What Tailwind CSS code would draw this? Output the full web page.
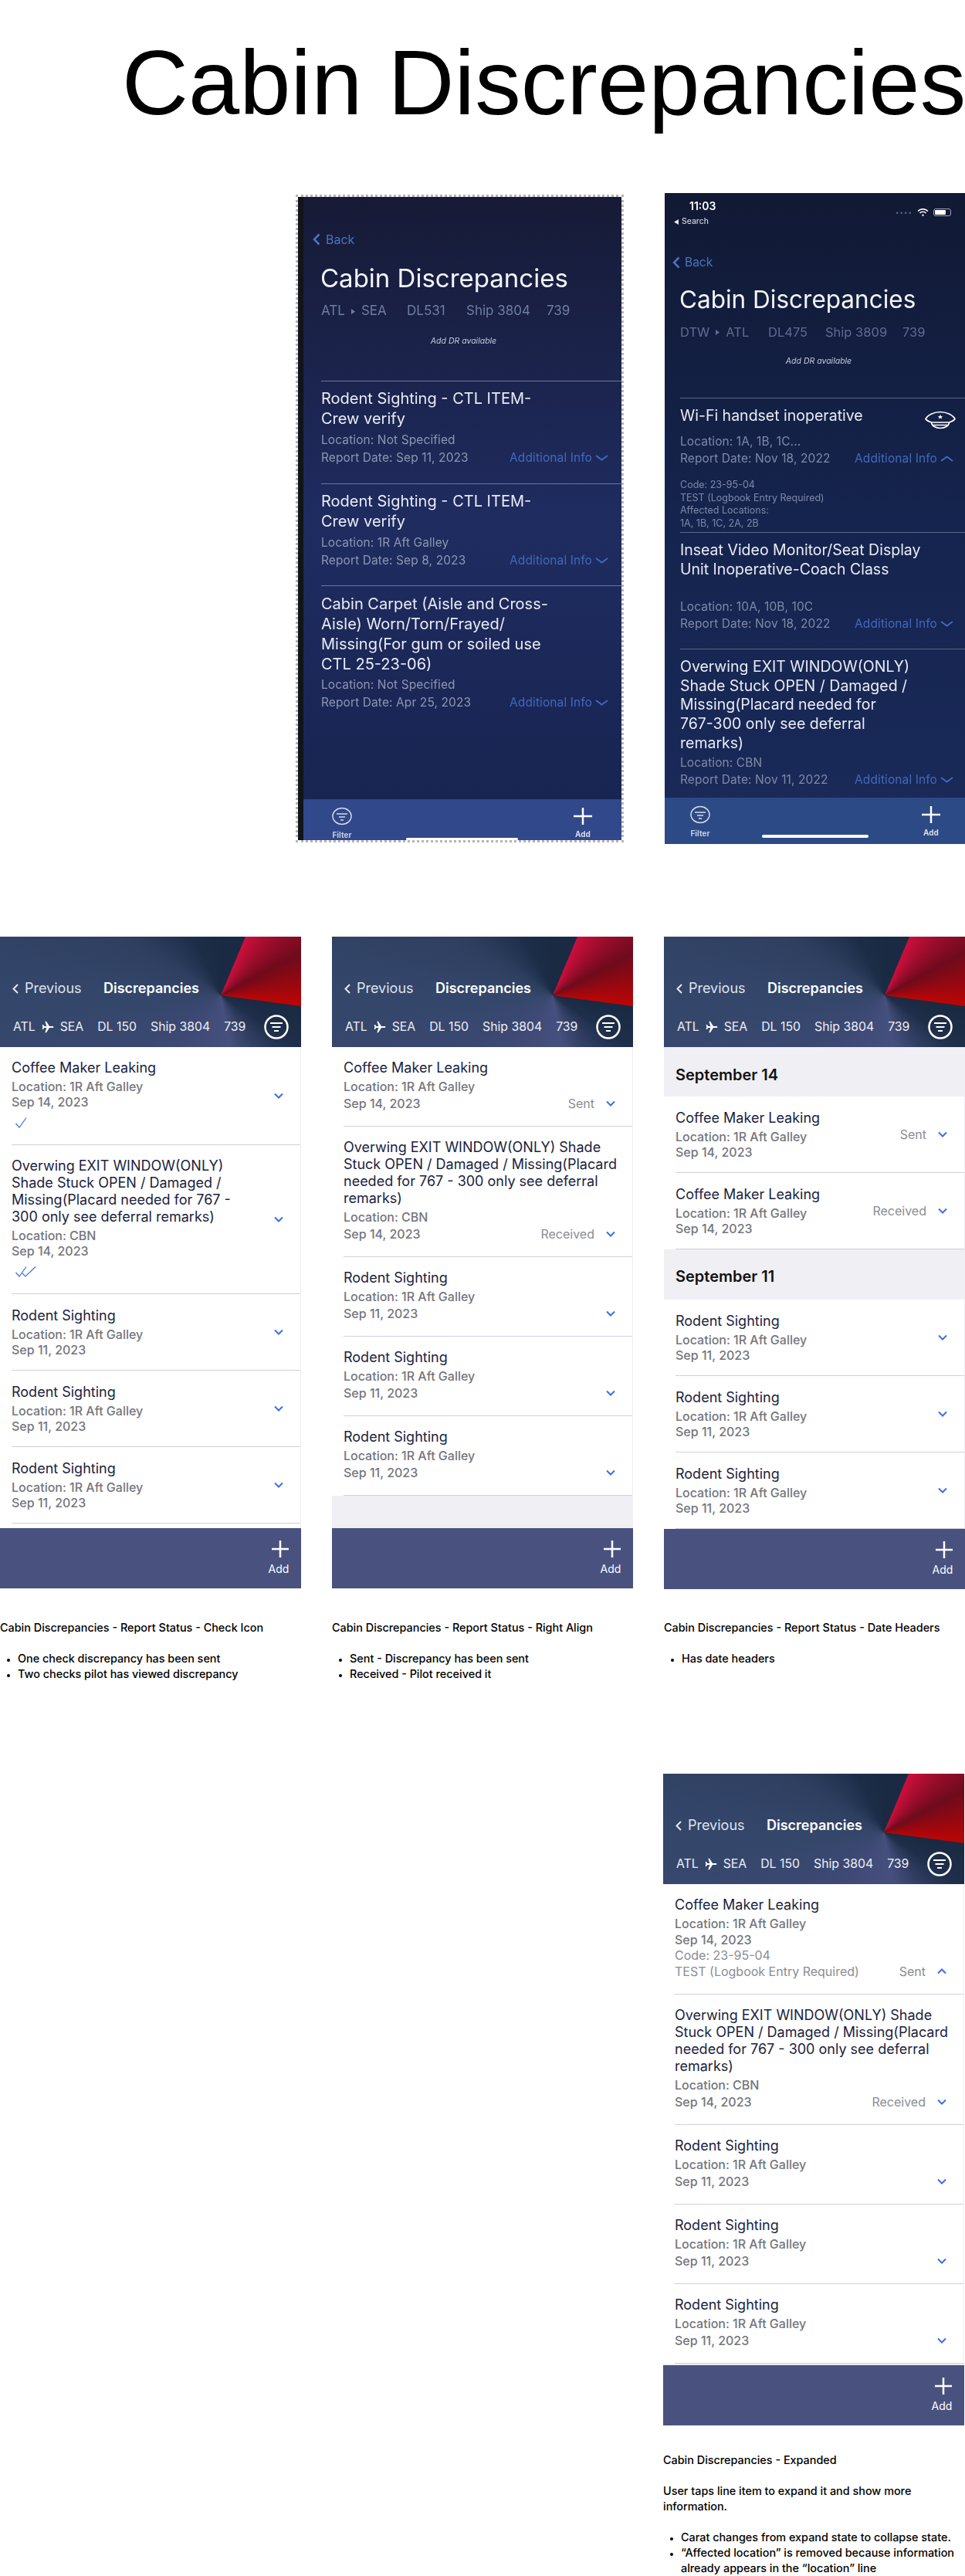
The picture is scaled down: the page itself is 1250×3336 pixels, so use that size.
<!DOCTYPE html>
<html lang="en">
<head>
  <meta charset="UTF-8">
  <title>Cabin Discrepancies</title>
  <script src="https://cdn.jsdelivr.net/npm/@tailwindcss/browser@4"></script>
</head>
<body class="bg-white w-[1250px] h-[3336px] overflow-hidden font-['Inter',sans-serif]">

  <!-- Page title -->
  <div class="h-[250px] pt-[47px] pl-[158px]">
    <h1 class="text-[119px] leading-[119px] tracking-[0.1px] whitespace-nowrap text-black font-['Liberation_Sans',sans-serif]">Cabin Discrepancies</h1>
  </div>

  <!-- Current app screenshots -->
  <div class="h-[963px] flex items-start pl-[383px]">

    <!-- Screenshot 1 -->
    <div class="mt-[2px] w-[425px] h-[839px] border-[3px] border-dotted border-[#b5b5b5] flex overflow-hidden">
      <div class="w-[7px] bg-[#111418] shrink-0"></div>
      <div class="relative flex-1 flex flex-col bg-linear-to-b from-[#161a36] via-[#1f2c60] to-[#17234f] blur-[0.4px]">
        <div class="mt-[43px] ml-[12px] h-6 flex items-center gap-[7px] text-[16px] text-[#4b74c0]">
          <svg class="w-[10px] h-[16px]" viewBox="0 0 10 16" fill="none" stroke="#4b74c0" stroke-width="2.5"><path d="M8.5 1.5 2 8l6.500 6.500"/></svg>
          <span>Back</span>
        </div>
        <div class="mt-[18px] ml-[22px] h-10 text-[33px] leading-10 text-[#f2f4f8]">Cabin Discrepancies</div>
        <div class="mt-[11px] ml-[23px] h-6 flex items-center text-[17px] text-[#6f7ca3]">
          <span class="flex items-center gap-2 w-[111px]">ATL <svg class="w-[5px] h-[7px]" viewBox="0 0 5 7" fill="#6f7ca3"><path d="M0 0l5 3.500L0 7z"/></svg> SEA</span>
          <span class="w-[77px]">DL531</span>
          <span class="w-[104px]">Ship 3804</span>
          <span>739</span>
        </div>
        <div class="mt-[19px] h-4 text-center text-[10.5px] leading-4 italic text-[#c3cade] pl-[3px]">Add DR available</div>

        <div class="mt-[43px] ml-[23px] border-t border-[#6a759f] pt-[9px] pb-[22px] pr-[17px]">
          <div class="text-[20px] leading-[26px] text-[#e8ebf3]">Rodent Sighting - CTL ITEM-<br>Crew verify</div>
          <div class="mt-[3px] text-[15.5px] tracking-[0.1px] leading-[23px] text-[#8d96b1]">Location: Not Specified</div>
          <div class="flex items-center justify-between text-[15.5px] tracking-[0.1px] leading-[23px] text-[#8d96b1]">
            <span>Report Date: Sep 11, 2023</span>
            <span class="flex items-center gap-1 text-[#4069bc]">Additional Info <svg class="w-[17px] h-[8px]" viewBox="0 0 17 8" fill="none" stroke="#4069bc" stroke-width="2"><path d="M1 1l7.500 5.500L16 1"/></svg></span>
          </div>
        </div>
        <div class="ml-[23px] border-t border-[#6a759f] pt-[9px] pb-[21px] pr-[17px]">
          <div class="text-[20px] leading-[26px] text-[#e8ebf3]">Rodent Sighting - CTL ITEM-<br>Crew verify</div>
          <div class="mt-[3px] text-[15.5px] tracking-[0.1px] leading-[23px] text-[#8d96b1]">Location: 1R Aft Galley</div>
          <div class="flex items-center justify-between text-[15.5px] tracking-[0.1px] leading-[23px] text-[#8d96b1]">
            <span>Report Date: Sep 8, 2023</span>
            <span class="flex items-center gap-1 text-[#4069bc]">Additional Info <svg class="w-[17px] h-[8px]" viewBox="0 0 17 8" fill="none" stroke="#4069bc" stroke-width="2"><path d="M1 1l7.500 5.500L16 1"/></svg></span>
          </div>
        </div>
        <div class="ml-[23px] border-t border-[#6a759f] pt-[10px] pr-[17px]">
          <div class="text-[20px] leading-[26px] text-[#e8ebf3]">Cabin Carpet (Aisle and Cross-<br>Aisle) Worn/Torn/Frayed/<br>Missing(For gum or soiled use<br>CTL 25-23-06)</div>
          <div class="mt-[2px] text-[15.5px] tracking-[0.1px] leading-[23px] text-[#8d96b1]">Location: Not Specified</div>
          <div class="flex items-center justify-between text-[15.5px] tracking-[0.1px] leading-[23px] text-[#8d96b1]">
            <span>Report Date: Apr 25, 2023</span>
            <span class="flex items-center gap-1 text-[#4069bc]">Additional Info <svg class="w-[17px] h-[8px]" viewBox="0 0 17 8" fill="none" stroke="#4069bc" stroke-width="2"><path d="M1 1l7.500 5.500L16 1"/></svg></span>
          </div>
        </div>

        <div class="mt-auto h-[53px] bg-[#31488a] flex justify-between px-[30px] pt-[10px]">
          <div class="w-10 flex flex-col items-center">
            <svg class="w-[26px] h-[24px]" viewBox="0 0 26 24" fill="none" stroke="#d5dbe8" stroke-width="1.5"><ellipse cx="13" cy="12" rx="12" ry="10.5"/><path d="M6 9h14M9 13h8M11 17h4"/></svg>
            <span class="mt-[6px] text-[10px] leading-3 font-bold text-[#c5cde0]">Filter</span>
          </div>
          <div class="w-10 flex flex-col items-center">
            <svg class="w-6 h-6" viewBox="0 0 24 24" fill="none" stroke="#fff" stroke-width="2.5"><path d="M12 1v22M0 12h24"/></svg>
            <span class="mt-[5px] text-[10px] leading-3 font-bold text-[#d5dbe8]">Add</span>
          </div>
        </div>
        <div class="absolute left-[133px] bottom-0 w-[145px] h-[3px] rounded-full bg-white"></div>
      </div>
    </div>

    <!-- Screenshot 2 -->
    <div class="relative ml-[53px] w-[389px] h-[843px] flex flex-col bg-linear-to-b from-[#111934] via-[#15244e] to-[#1a2a5a] blur-[0.4px] overflow-hidden">
      <div class="flex justify-between pt-2 pr-[18px]">
        <div>
          <div class="pl-[32px] h-[18px] text-[14px] leading-[18px] font-semibold text-white">11:03</div>
          <div class="mt-1 pl-[12px] h-[14px] flex items-center gap-1 text-[10.5px] text-[#e5e8f0]"><svg class="w-[6px] h-[7px]" viewBox="0 0 6 7" fill="#e5e8f0"><path d="M6 0v7L0 3.500z"/></svg>Search</div>
        </div>
        <div class="flex items-center gap-[6px] h-[34px]">
          <div class="text-[8px] tracking-[1px] text-[#5c6684]">••••</div>
          <svg class="w-[15px] h-[10px]" viewBox="0 0 15 10" fill="none" stroke="#fff" stroke-width="1.6"><path d="M1 3.500a9 9 0 0 1 13 0M3.500 6a5.500 5.500 0 0 1 8 0"/><circle cx="7.5" cy="8.6" r="1.2" fill="#fff" stroke="none"/></svg>
          <div class="w-[23px] h-[10px] rounded-[3px] border border-[#9aa3b8] p-[1px]"><div class="w-[14px] h-full rounded-[1px] bg-white"></div></div>
        </div>
      </div>
      <div class="mt-[34px] ml-[10px] h-6 flex items-center gap-[6px] text-[15.5px] text-[#4b74c0]">
        <svg class="w-[10px] h-[16px]" viewBox="0 0 10 16" fill="none" stroke="#4b74c0" stroke-width="2.5"><path d="M8.5 1.5 2 8l6.500 6.500"/></svg>
        <span>Back</span>
      </div>
      <div class="mt-4 ml-[19px] h-10 text-[31.5px] leading-10 text-[#f2f4f8]">Cabin Discrepancies</div>
      <div class="mt-[10px] ml-5 h-6 flex items-center text-[16.5px] text-[#5f6c92]">
        <span class="flex items-center gap-2 w-[114px]">DTW <svg class="w-[5px] h-[7px]" viewBox="0 0 5 7" fill="#5f6c92"><path d="M0 0l5 3.500L0 7z"/></svg> ATL</span>
        <span class="w-[74px]">DL475</span>
        <span class="w-[100px]">Ship 3809</span>
        <span>739</span>
      </div>
      <div class="mt-[18px] h-4 text-center text-[10.5px] leading-4 italic text-[#c3cade] pl-[10px]">Add DR available</div>

      <div class="mt-[39px] ml-5 border-t border-[#5b6688] pt-[10px] pb-[2px] pr-[15px]">
        <div class="h-[25px] flex justify-between items-start text-[19.5px] leading-[25px] text-[#e8ebf3]">
          <span>Wi-Fi handset inoperative</span>
          <svg class="mt-[6px] w-10 h-6 shrink-0 -mr-[3px]" viewBox="0 0 40 24" fill="none" stroke="#fff" stroke-width="1.6"><path d="M1 10.500C4 5 12 1.500 20 1.500S36 5 39 10.500c-2 3-6 4-7.500 4.500h-23C7 14.500 3 13.500 1 10.500z"/><path d="M8.500 15c0 4 5 7.500 11.500 7.500S31.500 19 31.500 15M9 18.500h22"/><path d="M20 5l1 2h2.200l-1.700 1.300.6 2.200-2.100-1.300-2.100 1.300.6-2.200L16.800 7H19z" fill="#fff" stroke="none"/></svg>
        </div>
        <div class="mt-[10px] text-[15.5px] tracking-[0.1px] leading-[22px] text-[#7e89a8]">Location: 1A, 1B, 1C...</div>
        <div class="flex items-center justify-between text-[15.5px] tracking-[0.1px] leading-[22px] text-[#7e89a8]">
          <span>Report Date: Nov 18, 2022</span>
          <span class="flex items-center gap-1 text-[#4069bc]">Additional Info <svg class="w-[17px] h-[8px]" viewBox="0 0 17 8" fill="none" stroke="#4069bc" stroke-width="2"><path d="M1 7l7.500-5.500L16 7"/></svg></span>
        </div>
        <div class="mt-[15px] text-[12.5px] leading-[16.7px] text-[#7e89a8]">Code: 23-95-04<br>TEST (Logbook Entry Required)<br>Affected Locations:<br>1A, 1B, 1C, 2A, 2B</div>
      </div>
      <div class="ml-5 border-t border-[#5b6688] pt-[10px] pb-[21px] pr-[15px]">
        <div class="text-[19.5px] leading-[25px] text-[#e8ebf3]">Inseat Video Monitor/Seat Display<br>Unit Inoperative-Coach Class</div>
        <div class="mt-[25px] text-[15.5px] tracking-[0.1px] leading-[22px] text-[#7e89a8]">Location: 10A, 10B, 10C</div>
        <div class="flex items-center justify-between text-[15.5px] tracking-[0.1px] leading-[22px] text-[#7e89a8]">
          <span>Report Date: Nov 18, 2022</span>
          <span class="flex items-center gap-1 text-[#4069bc]">Additional Info <svg class="w-[17px] h-[8px]" viewBox="0 0 17 8" fill="none" stroke="#4069bc" stroke-width="2"><path d="M1 1l7.500 5.500L16 1"/></svg></span>
        </div>
      </div>
      <div class="ml-5 border-t border-[#5b6688] pt-[10px] pr-[15px]">
        <div class="text-[19.5px] leading-[24.8px] text-[#e8ebf3]">Overwing EXIT WINDOW(ONLY)<br>Shade Stuck OPEN / Damaged /<br>Missing(Placard needed for<br>767-300 only see deferral<br>remarks)</div>
        <div class="mt-[2px] text-[15.5px] tracking-[0.1px] leading-[22px] text-[#7e89a8]">Location: CBN</div>
        <div class="flex items-center justify-between text-[15.5px] tracking-[0.1px] leading-[22px] text-[#7e89a8]">
          <span>Report Date: Nov 11, 2022</span>
          <span class="flex items-center gap-1 text-[#4069bc]">Additional Info <svg class="w-[17px] h-[8px]" viewBox="0 0 17 8" fill="none" stroke="#4069bc" stroke-width="2"><path d="M1 1l7.500 5.500L16 1"/></svg></span>
        </div>
      </div>

      <div class="absolute left-0 right-0 bottom-0 h-[60px] bg-[#2c4a85] flex justify-between pl-[26px] pr-[24px] pt-[10px]">
        <div class="w-10 flex flex-col items-center">
          <svg class="w-[26px] h-[24px]" viewBox="0 0 26 24" fill="none" stroke="#d5dbe8" stroke-width="1.5"><ellipse cx="13" cy="12" rx="12" ry="10.5"/><path d="M6 9h14M9 13h8M11 17h4"/></svg>
          <span class="mt-[6px] text-[10px] leading-3 font-bold text-[#c5cde0]">Filter</span>
        </div>
        <div class="w-10 flex flex-col items-center">
          <svg class="w-6 h-6" viewBox="0 0 24 24" fill="none" stroke="#fff" stroke-width="2.5"><path d="M12 1v22M0 12h24"/></svg>
          <span class="mt-[5px] text-[10px] leading-3 font-bold text-[#d5dbe8]">Add</span>
        </div>
      </div>
      <div class="absolute left-[126px] bottom-[8px] w-[138px] h-[4px] rounded-full bg-white"></div>
    </div>
  </div>

  <!-- Report status options -->
  <div class="h-[1084px] grid grid-cols-[390px_390px_390px] gap-x-10 items-start">

    <!-- Option: check icon -->
    <div>
      <div class="w-[390px] h-[844px] flex flex-col bg-[#efeff4]">
        <div class="relative h-[143px] shrink-0 overflow-hidden bg-[conic-gradient(from_0deg_at_286px_76px,#1a2a42_0deg,#1a2a42_100deg,#1f2f4b_125deg,#46507e_170deg,#3f4a76_215deg,#34466a_270deg,#2e3f60_300deg,#1c2d48_335deg,#1a2a42_360deg)]">
          <div class="absolute left-[286px] top-0 w-[104px] h-[91px] [clip-path:polygon(32px_0,104px_0,104px_90px,0_76px)] bg-[conic-gradient(from_0deg_at_0_76px,#cc0f3d_23deg,#6e0b1c_62deg,#bd0505_98deg)]"></div>
          <div class="relative pt-[55px] pl-[16px] h-[79px] flex items-center text-[18px] leading-6">
            <svg class="w-[8px] h-[13px]" viewBox="0 0 8 13" fill="none" stroke="#e6e9f2" stroke-width="2"><path d="M7 1 1.500 6.500 7 12"/></svg>
            <span class="ml-[8px] w-[102px] text-[#dfe3ee]">Previous</span>
            <span class="font-semibold text-white">Discrepancies</span>
          </div>
          <div class="relative mt-[22px] pl-[17px] pr-4 h-8 flex items-center justify-between text-[15.8px] text-[#eef0f6]">
            <div class="flex items-center gap-[18px]">
              <span class="flex items-center gap-2">ATL <svg class="w-4 h-4" viewBox="0 0 24 24" fill="#fff"><path d="M23 12c0-.8-.7-1.500-1.500-1.500H15L9 1H6.500l3 9.500H5L3 7.500H1L2 12l-1 4.500h2L5 13.500h4.500L6.500 23H9l6-9.500h6.500c.8 0 1.500-.7 1.500-1.500z"/></svg> SEA</span>
              <span>DL 150</span><span>Ship 3804</span><span>739</span>
            </div>
            <svg class="w-8 h-8" viewBox="0 0 32 32" fill="none" stroke="#fff"><circle cx="16" cy="16" r="14.500" stroke-width="2.500"/><path d="M8 11h16M10.500 16h11M13 21h6" stroke-width="2"/></svg>
          </div>
        </div>
        <div class="flex-1 bg-white border-r border-[#eeeef3]">
          <div class="ml-[15px] flex items-center justify-between border-b border-[#cfcfe3] pr-[22px] h-[127px]">
            <div class="pt-4 pb-[21px]">
              <div class="text-[18px] leading-[22px] text-[#1a2340]">Coffee Maker Leaking</div>
              <div class="mt-[3px] text-[16px] leading-5 font-medium text-[#74767c]">Location: 1R Aft Galley</div>
              <div class="text-[16px] leading-5 font-medium text-[#74767c]">Sep 14, 2023</div>
              <svg class="mt-[10px] ml-[5px] w-[15px] h-[14px]" viewBox="0 0 15 14" fill="none" stroke="#3b6fe0" stroke-width="1.200"><path d="M0.500 8 5 13 14 0.500"/></svg>
            </div>
            <svg class="w-3 h-2 shrink-0" viewBox="0 0 12 8" fill="none" stroke="#3b6fe0" stroke-width="2"><path d="M1 1.500l5 5 5-5"/></svg>
          </div>
          <div class="ml-[15px] flex items-center justify-between border-b border-[#cfcfe3] pr-[22px] h-[193px]">
            <div class="pt-4 pb-[21px]">
              <div class="text-[18px] leading-[22px] text-[#1a2340]">Overwing EXIT WINDOW(ONLY)<br>Shade Stuck OPEN / Damaged /<br>Missing(Placard needed for 767 -<br>300 only see deferral remarks)</div>
              <div class="mt-[3px] text-[16px] leading-5 font-medium text-[#74767c]">Location: CBN</div>
              <div class="text-[16px] leading-5 font-medium text-[#74767c]">Sep 14, 2023</div>
              <svg class="mt-[10px] ml-[5px] w-[27px] h-[14px]" viewBox="0 0 27 14" fill="none" stroke="#3b6fe0" stroke-width="1.200"><path d="M0.500 8 5 13 14 0.500M9 9l4 4 13-12.500"/></svg>
            </div>
            <svg class="w-3 h-2 shrink-0" viewBox="0 0 12 8" fill="none" stroke="#3b6fe0" stroke-width="2"><path d="M1 1.500l5 5 5-5"/></svg>
          </div>
          <div class="ml-[15px] flex items-center justify-between border-b border-[#cfcfe3] pr-[22px] h-[99px]">
            <div>
              <div class="text-[18px] leading-[22px] text-[#1a2340]">Rodent Sighting</div>
              <div class="mt-[3px] text-[16px] leading-5 font-medium text-[#74767c]">Location: 1R Aft Galley</div>
              <div class="text-[16px] leading-5 font-medium text-[#74767c]">Sep 11, 2023</div>
            </div>
            <svg class="w-3 h-2 shrink-0" viewBox="0 0 12 8" fill="none" stroke="#3b6fe0" stroke-width="2"><path d="M1 1.500l5 5 5-5"/></svg>
          </div>
          <div class="ml-[15px] flex items-center justify-between border-b border-[#cfcfe3] pr-[22px] h-[99px]">
            <div>
              <div class="text-[18px] leading-[22px] text-[#1a2340]">Rodent Sighting</div>
              <div class="mt-[3px] text-[16px] leading-5 font-medium text-[#74767c]">Location: 1R Aft Galley</div>
              <div class="text-[16px] leading-5 font-medium text-[#74767c]">Sep 11, 2023</div>
            </div>
            <svg class="w-3 h-2 shrink-0" viewBox="0 0 12 8" fill="none" stroke="#3b6fe0" stroke-width="2"><path d="M1 1.500l5 5 5-5"/></svg>
          </div>
          <div class="ml-[15px] flex items-center justify-between border-b border-[#cfcfe3] pr-[22px] h-[99px]">
            <div>
              <div class="text-[18px] leading-[22px] text-[#1a2340]">Rodent Sighting</div>
              <div class="mt-[3px] text-[16px] leading-5 font-medium text-[#74767c]">Location: 1R Aft Galley</div>
              <div class="text-[16px] leading-5 font-medium text-[#74767c]">Sep 11, 2023</div>
            </div>
            <svg class="w-3 h-2 shrink-0" viewBox="0 0 12 8" fill="none" stroke="#3b6fe0" stroke-width="2"><path d="M1 1.500l5 5 5-5"/></svg>
          </div>
        </div>
        <div class="h-[78px] shrink-0 bg-[#49527f] flex justify-end pr-[15px]">
          <div class="flex flex-col items-center pt-4 w-[28px]">
            <svg class="w-[22px] h-[22px] ml-[3px]" viewBox="0 0 22 22" fill="none" stroke="#fff" stroke-width="2.500"><path d="M11 0v22M0 11h22"/></svg>
            <span class="mt-[7px] text-[14px] leading-4 text-white">Add</span>
          </div>
        </div>
      </div>
      <div class="mt-[41px] text-[14.4px] leading-5 font-medium text-black">Cabin Discrepancies - Report Status - Check Icon</div>
      <ul class="mt-5 text-[14.4px] leading-5 font-medium text-black list-disc pl-[23px] marker:text-[11px]">
        <li>One check discrepancy has been sent</li>
        <li>Two checks pilot has viewed discrepancy</li>
      </ul>
    </div>

    <!-- Option: right align -->
    <div>
      <div class="w-[390px] h-[844px] flex flex-col bg-[#efeff4]">
        <div class="relative h-[143px] shrink-0 overflow-hidden bg-[conic-gradient(from_0deg_at_286px_76px,#1a2a42_0deg,#1a2a42_100deg,#1f2f4b_125deg,#46507e_170deg,#3f4a76_215deg,#34466a_270deg,#2e3f60_300deg,#1c2d48_335deg,#1a2a42_360deg)]">
          <div class="absolute left-[286px] top-0 w-[104px] h-[91px] [clip-path:polygon(32px_0,104px_0,104px_90px,0_76px)] bg-[conic-gradient(from_0deg_at_0_76px,#cc0f3d_23deg,#6e0b1c_62deg,#bd0505_98deg)]"></div>
          <div class="relative pt-[55px] pl-[16px] h-[79px] flex items-center text-[18px] leading-6">
            <svg class="w-[8px] h-[13px]" viewBox="0 0 8 13" fill="none" stroke="#e6e9f2" stroke-width="2"><path d="M7 1 1.500 6.500 7 12"/></svg>
            <span class="ml-[8px] w-[102px] text-[#dfe3ee]">Previous</span>
            <span class="font-semibold text-white">Discrepancies</span>
          </div>
          <div class="relative mt-[22px] pl-[17px] pr-4 h-8 flex items-center justify-between text-[15.8px] text-[#eef0f6]">
            <div class="flex items-center gap-[18px]">
              <span class="flex items-center gap-2">ATL <svg class="w-4 h-4" viewBox="0 0 24 24" fill="#fff"><path d="M23 12c0-.8-.7-1.500-1.500-1.500H15L9 1H6.500l3 9.500H5L3 7.500H1L2 12l-1 4.500h2L5 13.500h4.500L6.500 23H9l6-9.500h6.500c.8 0 1.500-.7 1.500-1.500z"/></svg> SEA</span>
              <span>DL 150</span><span>Ship 3804</span><span>739</span>
            </div>
            <svg class="w-8 h-8" viewBox="0 0 32 32" fill="none" stroke="#fff"><circle cx="16" cy="16" r="14.500" stroke-width="2.500"/><path d="M8 11h16M10.500 16h11M13 21h6" stroke-width="2"/></svg>
          </div>
        </div>
        <div class="flex-1">
          <div class="bg-white border-r border-[#eeeef3]">
            <div class="ml-[15px] flex items-end justify-between border-b border-[#cfcfe3] pr-[22px] pt-4 pb-[19px]">
              <div>
                <div class="text-[18px] leading-[22px] text-[#1a2340]">Coffee Maker Leaking</div>
                <div class="mt-[3px] text-[16px] leading-5 font-medium text-[#74767c]">Location: 1R Aft Galley</div>
                <div class="mt-[2px] text-[16px] leading-5 font-medium text-[#74767c]">Sep 14, 2023</div>
              </div>
              <div class="h-5 flex items-center gap-[15px] text-[16px] text-[#8a8d94]">Sent <svg class="w-3 h-2 shrink-0" viewBox="0 0 12 8" fill="none" stroke="#3b6fe0" stroke-width="2"><path d="M1 1.500l5 5 5-5"/></svg></div>
            </div>
            <div class="ml-[15px] flex items-end justify-between border-b border-[#cfcfe3] pr-[22px] pt-4 pb-[19px]">
              <div class="flex-1 min-w-0">
                <div class="text-[18px] leading-[22px] text-[#1a2340] whitespace-nowrap">Overwing EXIT WINDOW(ONLY) Shade<br>Stuck OPEN / Damaged / Missing(Placard<br>needed for 767 - 300 only see deferral<br>remarks)</div>
                <div class="mt-[3px] text-[16px] leading-5 font-medium text-[#74767c]">Location: CBN</div>
                <div class="mt-[2px] text-[16px] leading-5 font-medium text-[#74767c]">Sep 14, 2023</div>
              </div>
              <div class="h-5 shrink-0 flex items-center gap-[15px] text-[16px] text-[#8a8d94]">Received <svg class="w-3 h-2 shrink-0" viewBox="0 0 12 8" fill="none" stroke="#3b6fe0" stroke-width="2"><path d="M1 1.500l5 5 5-5"/></svg></div>
            </div>
            <div class="ml-[15px] flex items-end justify-between border-b border-[#cfcfe3] pr-[22px] pt-4 pb-[19px]">
              <div>
                <div class="text-[18px] leading-[22px] text-[#1a2340]">Rodent Sighting</div>
                <div class="mt-[3px] text-[16px] leading-5 font-medium text-[#74767c]">Location: 1R Aft Galley</div>
                <div class="mt-[2px] text-[16px] leading-5 font-medium text-[#74767c]">Sep 11, 2023</div>
              </div>
              <div class="h-5 flex items-center"><svg class="w-3 h-2 shrink-0" viewBox="0 0 12 8" fill="none" stroke="#3b6fe0" stroke-width="2"><path d="M1 1.500l5 5 5-5"/></svg></div>
            </div>
            <div class="ml-[15px] flex items-end justify-between border-b border-[#cfcfe3] pr-[22px] pt-4 pb-[19px]">
              <div>
                <div class="text-[18px] leading-[22px] text-[#1a2340]">Rodent Sighting</div>
                <div class="mt-[3px] text-[16px] leading-5 font-medium text-[#74767c]">Location: 1R Aft Galley</div>
                <div class="mt-[2px] text-[16px] leading-5 font-medium text-[#74767c]">Sep 11, 2023</div>
              </div>
              <div class="h-5 flex items-center"><svg class="w-3 h-2 shrink-0" viewBox="0 0 12 8" fill="none" stroke="#3b6fe0" stroke-width="2"><path d="M1 1.500l5 5 5-5"/></svg></div>
            </div>
            <div class="ml-[15px] flex items-end justify-between border-b border-[#cfcfe3] pr-[22px] pt-4 pb-[19px]">
              <div>
                <div class="text-[18px] leading-[22px] text-[#1a2340]">Rodent Sighting</div>
                <div class="mt-[3px] text-[16px] leading-5 font-medium text-[#74767c]">Location: 1R Aft Galley</div>
                <div class="mt-[2px] text-[16px] leading-5 font-medium text-[#74767c]">Sep 11, 2023</div>
              </div>
              <div class="h-5 flex items-center"><svg class="w-3 h-2 shrink-0" viewBox="0 0 12 8" fill="none" stroke="#3b6fe0" stroke-width="2"><path d="M1 1.500l5 5 5-5"/></svg></div>
            </div>
          </div>
        </div>
        <div class="h-[78px] shrink-0 bg-[#49527f] flex justify-end pr-[15px]">
          <div class="flex flex-col items-center pt-4 w-[28px]">
            <svg class="w-[22px] h-[22px] ml-[3px]" viewBox="0 0 22 22" fill="none" stroke="#fff" stroke-width="2.500"><path d="M11 0v22M0 11h22"/></svg>
            <span class="mt-[7px] text-[14px] leading-4 text-white">Add</span>
          </div>
        </div>
      </div>
      <div class="mt-[41px] text-[14.4px] leading-5 font-medium text-black">Cabin Discrepancies - Report Status - Right Align</div>
      <ul class="mt-5 text-[14.4px] leading-5 font-medium text-black list-disc pl-[23px] marker:text-[11px]">
        <li>Sent - Discrepancy has been sent</li>
        <li>Received - Pilot received it</li>
      </ul>
    </div>

    <!-- Option: date headers -->
    <div>
      <div class="w-[390px] h-[844px] flex flex-col bg-[#efeff4]">
        <div class="relative h-[143px] shrink-0 overflow-hidden bg-[conic-gradient(from_0deg_at_286px_76px,#1a2a42_0deg,#1a2a42_100deg,#1f2f4b_125deg,#46507e_170deg,#3f4a76_215deg,#34466a_270deg,#2e3f60_300deg,#1c2d48_335deg,#1a2a42_360deg)]">
          <div class="absolute left-[286px] top-0 w-[104px] h-[91px] [clip-path:polygon(32px_0,104px_0,104px_90px,0_76px)] bg-[conic-gradient(from_0deg_at_0_76px,#cc0f3d_23deg,#6e0b1c_62deg,#bd0505_98deg)]"></div>
          <div class="relative pt-[55px] pl-[16px] h-[79px] flex items-center text-[18px] leading-6">
            <svg class="w-[8px] h-[13px]" viewBox="0 0 8 13" fill="none" stroke="#e6e9f2" stroke-width="2"><path d="M7 1 1.500 6.500 7 12"/></svg>
            <span class="ml-[8px] w-[102px] text-[#dfe3ee]">Previous</span>
            <span class="font-semibold text-white">Discrepancies</span>
          </div>
          <div class="relative mt-[22px] pl-[17px] pr-4 h-8 flex items-center justify-between text-[15.8px] text-[#eef0f6]">
            <div class="flex items-center gap-[18px]">
              <span class="flex items-center gap-2">ATL <svg class="w-4 h-4" viewBox="0 0 24 24" fill="#fff"><path d="M23 12c0-.8-.7-1.500-1.500-1.500H15L9 1H6.500l3 9.500H5L3 7.500H1L2 12l-1 4.500h2L5 13.500h4.500L6.500 23H9l6-9.500h6.500c.8 0 1.500-.7 1.500-1.500z"/></svg> SEA</span>
              <span>DL 150</span><span>Ship 3804</span><span>739</span>
            </div>
            <svg class="w-8 h-8" viewBox="0 0 32 32" fill="none" stroke="#fff"><circle cx="16" cy="16" r="14.500" stroke-width="2.500"/><path d="M8 11h16M10.500 16h11M13 21h6" stroke-width="2"/></svg>
          </div>
        </div>
        <div class="flex-1">
          <div class="h-16 pl-[15px] pt-2 flex items-center text-[20px] font-semibold text-[#111]">September 14</div>
          <div class="bg-white border-r border-[#eeeef3]">
            <div class="ml-[15px] h-[99px] flex items-center justify-between border-b border-[#cfcfe3] pr-[22px]">
              <div>
                <div class="text-[18px] leading-[22px] text-[#1a2340]">Coffee Maker Leaking</div>
                <div class="mt-[3px] text-[16px] leading-5 font-medium text-[#74767c]">Location: 1R Aft Galley</div>
                <div class="text-[16px] leading-5 font-medium text-[#74767c]">Sep 14, 2023</div>
              </div>
              <div class="flex items-center gap-[15px] text-[16px] text-[#8a8d94]">Sent <svg class="w-3 h-2 shrink-0" viewBox="0 0 12 8" fill="none" stroke="#3b6fe0" stroke-width="2"><path d="M1 1.500l5 5 5-5"/></svg></div>
            </div>
            <div class="ml-[15px] h-[99px] flex items-center justify-between border-b border-[#cfcfe3] pr-[22px]">
              <div>
                <div class="text-[18px] leading-[22px] text-[#1a2340]">Coffee Maker Leaking</div>
                <div class="mt-[3px] text-[16px] leading-5 font-medium text-[#74767c]">Location: 1R Aft Galley</div>
                <div class="text-[16px] leading-5 font-medium text-[#74767c]">Sep 14, 2023</div>
              </div>
              <div class="flex items-center gap-[15px] text-[16px] text-[#8a8d94]">Received <svg class="w-3 h-2 shrink-0" viewBox="0 0 12 8" fill="none" stroke="#3b6fe0" stroke-width="2"><path d="M1 1.500l5 5 5-5"/></svg></div>
            </div>
          </div>
          <div class="h-[65px] pl-[15px] pt-1 flex items-center text-[20px] font-semibold text-[#111]">September 11</div>
          <div class="bg-white border-r border-[#eeeef3]">
            <div class="ml-[15px] h-[99px] flex items-center justify-between border-b border-[#cfcfe3] pr-[22px]">
              <div>
                <div class="text-[18px] leading-[22px] text-[#1a2340]">Rodent Sighting</div>
                <div class="mt-[3px] text-[16px] leading-5 font-medium text-[#74767c]">Location: 1R Aft Galley</div>
                <div class="text-[16px] leading-5 font-medium text-[#74767c]">Sep 11, 2023</div>
              </div>
              <svg class="w-3 h-2 shrink-0" viewBox="0 0 12 8" fill="none" stroke="#3b6fe0" stroke-width="2"><path d="M1 1.500l5 5 5-5"/></svg>
            </div>
            <div class="ml-[15px] h-[99px] flex items-center justify-between border-b border-[#cfcfe3] pr-[22px]">
              <div>
                <div class="text-[18px] leading-[22px] text-[#1a2340]">Rodent Sighting</div>
                <div class="mt-[3px] text-[16px] leading-5 font-medium text-[#74767c]">Location: 1R Aft Galley</div>
                <div class="text-[16px] leading-5 font-medium text-[#74767c]">Sep 11, 2023</div>
              </div>
              <svg class="w-3 h-2 shrink-0" viewBox="0 0 12 8" fill="none" stroke="#3b6fe0" stroke-width="2"><path d="M1 1.500l5 5 5-5"/></svg>
            </div>
            <div class="ml-[15px] h-[99px] flex items-center justify-between border-b border-[#cfcfe3] pr-[22px]">
              <div>
                <div class="text-[18px] leading-[22px] text-[#1a2340]">Rodent Sighting</div>
                <div class="mt-[3px] text-[16px] leading-5 font-medium text-[#74767c]">Location: 1R Aft Galley</div>
                <div class="text-[16px] leading-5 font-medium text-[#74767c]">Sep 11, 2023</div>
              </div>
              <svg class="w-3 h-2 shrink-0" viewBox="0 0 12 8" fill="none" stroke="#3b6fe0" stroke-width="2"><path d="M1 1.500l5 5 5-5"/></svg>
            </div>
          </div>
        </div>
        <div class="h-[78px] shrink-0 bg-[#49527f] flex justify-end pr-[15px]">
          <div class="flex flex-col items-center pt-4 w-[28px]">
            <svg class="w-[22px] h-[22px] ml-[3px]" viewBox="0 0 22 22" fill="none" stroke="#fff" stroke-width="2.500"><path d="M11 0v22M0 11h22"/></svg>
            <span class="mt-[7px] text-[14px] leading-4 text-white">Add</span>
          </div>
        </div>
      </div>
      <div class="mt-[41px] text-[14.4px] leading-5 font-medium text-black">Cabin Discrepancies - Report Status - Date Headers</div>
      <ul class="mt-5 text-[14.4px] leading-5 font-medium text-black list-disc pl-[23px] marker:text-[11px]">
        <li>Has date headers</li>
      </ul>
    </div>
  </div>

  <!-- Option: expanded row -->
  <div class="pl-[859px]">
    <div class="w-[390px] h-[844px] flex flex-col bg-[#efeff4]">
      <div class="relative h-[143px] shrink-0 overflow-hidden bg-[conic-gradient(from_0deg_at_286px_76px,#1a2a42_0deg,#1a2a42_100deg,#1f2f4b_125deg,#46507e_170deg,#3f4a76_215deg,#34466a_270deg,#2e3f60_300deg,#1c2d48_335deg,#1a2a42_360deg)]">
        <div class="absolute left-[286px] top-0 w-[104px] h-[91px] [clip-path:polygon(32px_0,104px_0,104px_90px,0_76px)] bg-[conic-gradient(from_0deg_at_0_76px,#cc0f3d_23deg,#6e0b1c_62deg,#bd0505_98deg)]"></div>
        <div class="relative pt-[55px] pl-[16px] h-[79px] flex items-center text-[18px] leading-6">
          <svg class="w-[8px] h-[13px]" viewBox="0 0 8 13" fill="none" stroke="#e6e9f2" stroke-width="2"><path d="M7 1 1.500 6.500 7 12"/></svg>
          <span class="ml-[8px] w-[102px] text-[#dfe3ee]">Previous</span>
          <span class="font-semibold text-white">Discrepancies</span>
        </div>
        <div class="relative mt-[22px] pl-[17px] pr-4 h-8 flex items-center justify-between text-[15.8px] text-[#eef0f6]">
          <div class="flex items-center gap-[18px]">
            <span class="flex items-center gap-2">ATL <svg class="w-4 h-4" viewBox="0 0 24 24" fill="#fff"><path d="M23 12c0-.8-.7-1.500-1.500-1.500H15L9 1H6.500l3 9.500H5L3 7.500H1L2 12l-1 4.500h2L5 13.500h4.500L6.500 23H9l6-9.500h6.500c.8 0 1.500-.7 1.500-1.500z"/></svg> SEA</span>
            <span>DL 150</span><span>Ship 3804</span><span>739</span>
          </div>
          <svg class="w-8 h-8" viewBox="0 0 32 32" fill="none" stroke="#fff"><circle cx="16" cy="16" r="14.500" stroke-width="2.500"/><path d="M8 11h16M10.500 16h11M13 21h6" stroke-width="2"/></svg>
        </div>
      </div>
      <div class="flex-1">
        <div class="bg-white border-r border-[#eeeef3]">
          <div class="ml-[15px] flex items-end justify-between border-b border-[#cfcfe3] pr-[22px] pt-4 pb-[19px]">
            <div>
              <div class="text-[18px] leading-[22px] text-[#1a2340]">Coffee Maker Leaking</div>
              <div class="mt-[3px] text-[16px] leading-5 font-medium text-[#74767c]">Location: 1R Aft Galley</div>
              <div class="mt-[1px] text-[16px] leading-5 font-medium text-[#74767c]">Sep 14, 2023</div>
              <div class="text-[16px] leading-5 text-[#8a8d94]">Code: 23-95-04</div>
              <div class="mt-[1px] text-[16px] leading-5 text-[#8a8d94]">TEST (Logbook Entry Required)</div>
            </div>
            <div class="h-5 flex items-center gap-[15px] text-[16px] text-[#8a8d94]">Sent <svg class="w-3 h-2 shrink-0" viewBox="0 0 12 8" fill="none" stroke="#3b6fe0" stroke-width="2"><path d="M1 6.500l5-5 5 5"/></svg></div>
          </div>
          <div class="ml-[15px] flex items-end justify-between border-b border-[#cfcfe3] pr-[22px] pt-4 pb-[19px]">
            <div class="flex-1 min-w-0">
              <div class="text-[18px] leading-[22px] text-[#1a2340] whitespace-nowrap">Overwing EXIT WINDOW(ONLY) Shade<br>Stuck OPEN / Damaged / Missing(Placard<br>needed for 767 - 300 only see deferral<br>remarks)</div>
              <div class="mt-[3px] text-[16px] leading-5 font-medium text-[#74767c]">Location: CBN</div>
              <div class="mt-[2px] text-[16px] leading-5 font-medium text-[#74767c]">Sep 14, 2023</div>
            </div>
            <div class="h-5 shrink-0 flex items-center gap-[15px] text-[16px] text-[#8a8d94]">Received <svg class="w-3 h-2 shrink-0" viewBox="0 0 12 8" fill="none" stroke="#3b6fe0" stroke-width="2"><path d="M1 1.500l5 5 5-5"/></svg></div>
          </div>
          <div class="ml-[15px] flex items-end justify-between border-b border-[#cfcfe3] pr-[22px] pt-4 pb-[19px]">
            <div>
              <div class="text-[18px] leading-[22px] text-[#1a2340]">Rodent Sighting</div>
              <div class="mt-[3px] text-[16px] leading-5 font-medium text-[#74767c]">Location: 1R Aft Galley</div>
              <div class="mt-[2px] text-[16px] leading-5 font-medium text-[#74767c]">Sep 11, 2023</div>
            </div>
            <div class="h-5 flex items-center"><svg class="w-3 h-2 shrink-0" viewBox="0 0 12 8" fill="none" stroke="#3b6fe0" stroke-width="2"><path d="M1 1.500l5 5 5-5"/></svg></div>
          </div>
          <div class="ml-[15px] flex items-end justify-between border-b border-[#cfcfe3] pr-[22px] pt-4 pb-[19px]">
            <div>
              <div class="text-[18px] leading-[22px] text-[#1a2340]">Rodent Sighting</div>
              <div class="mt-[3px] text-[16px] leading-5 font-medium text-[#74767c]">Location: 1R Aft Galley</div>
              <div class="mt-[2px] text-[16px] leading-5 font-medium text-[#74767c]">Sep 11, 2023</div>
            </div>
            <div class="h-5 flex items-center"><svg class="w-3 h-2 shrink-0" viewBox="0 0 12 8" fill="none" stroke="#3b6fe0" stroke-width="2"><path d="M1 1.500l5 5 5-5"/></svg></div>
          </div>
          <div class="ml-[15px] flex items-end justify-between border-b border-[#cfcfe3] pr-[22px] pt-4 pb-[19px]">
            <div>
              <div class="text-[18px] leading-[22px] text-[#1a2340]">Rodent Sighting</div>
              <div class="mt-[3px] text-[16px] leading-5 font-medium text-[#74767c]">Location: 1R Aft Galley</div>
              <div class="mt-[2px] text-[16px] leading-5 font-medium text-[#74767c]">Sep 11, 2023</div>
            </div>
            <div class="h-5 flex items-center"><svg class="w-3 h-2 shrink-0" viewBox="0 0 12 8" fill="none" stroke="#3b6fe0" stroke-width="2"><path d="M1 1.500l5 5 5-5"/></svg></div>
          </div>
        </div>
      </div>
      <div class="h-[78px] shrink-0 bg-[#49527f] flex justify-end pr-[15px]">
        <div class="flex flex-col items-center pt-4 w-[28px]">
          <svg class="w-[22px] h-[22px] ml-[3px]" viewBox="0 0 22 22" fill="none" stroke="#fff" stroke-width="2.500"><path d="M11 0v22M0 11h22"/></svg>
          <span class="mt-[7px] text-[14px] leading-4 text-white">Add</span>
        </div>
      </div>
    </div>
    <div class="mt-[35px] text-[14.4px] leading-5 font-medium text-black">Cabin Discrepancies - Expanded</div>
    <p class="mt-5 text-[14.4px] leading-5 font-medium text-black">User taps line item to expand it and show more<br>information.</p>
    <ul class="mt-5 text-[14.4px] leading-5 font-medium text-black list-disc pl-[23px] marker:text-[11px]">
      <li>Carat changes from expand state to collapse state.</li>
      <li>“Affected location” is removed because information<br>already appears in the “location” line</li>
    </ul>
  </div>
</body>
</html>
